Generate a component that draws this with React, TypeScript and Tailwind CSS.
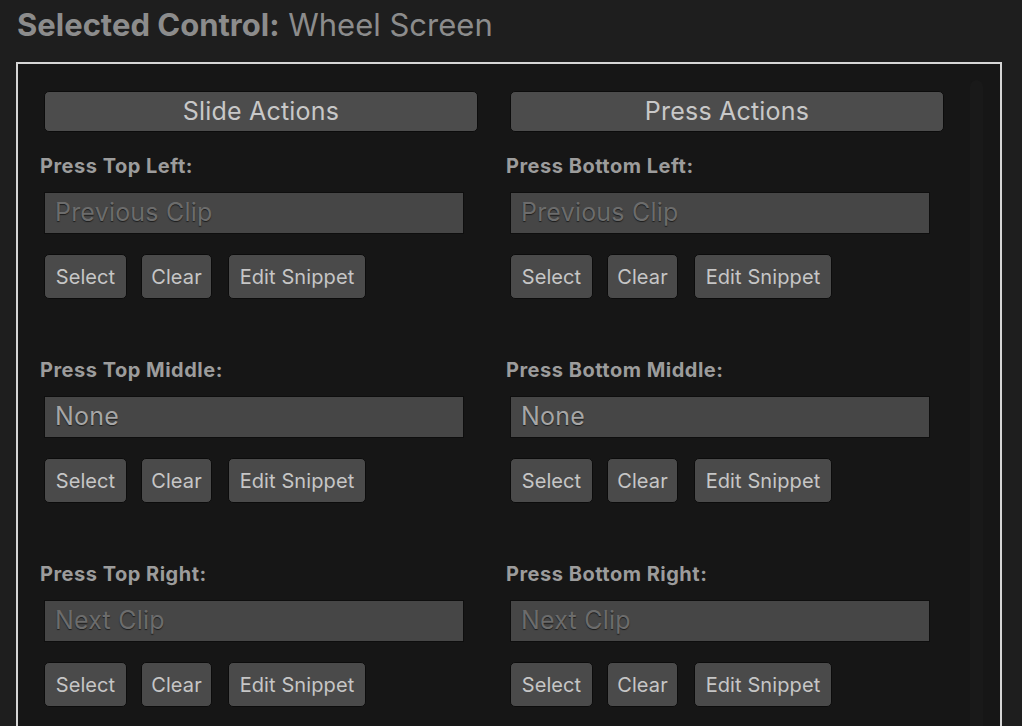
import React from "react";

const font = { fontFamily: "Inter, 'Noto Sans', sans-serif" };

interface Slot {
  label: string;
  value: string;
  placeholder?: boolean;
}

const leftSlots: Slot[] = [
  { label: "Press Top Left:", value: "Previous Clip", placeholder: true },
  { label: "Press Top Middle:", value: "None" },
  { label: "Press Top Right:", value: "Next Clip", placeholder: true },
];

const rightSlots: Slot[] = [
  { label: "Press Bottom Left:", value: "Previous Clip", placeholder: true },
  { label: "Press Bottom Middle:", value: "None" },
  { label: "Press Bottom Right:", value: "Next Clip", placeholder: true },
];

function SmallButton({ children, width }: { children: React.ReactNode; width: string }) {
  return (
    <button
      className={`h-[45px] ${width} rounded-[5px] border border-[#0c0c0c] bg-[#4a4a4a] text-[20px] tracking-[0.1px] text-[#c6c6c6] flex items-center justify-center`}
    >
      {children}
    </button>
  );
}

function SlotBlock({ slot }: { slot: Slot }) {
  return (
    <div className="flex flex-col h-[204px]">
      {/* Label */}
      <div className="h-[24px] leading-[24px] text-[20px] tracking-[0.5px] font-bold text-[#9c9c9c] -ml-1">
        {slot.label}
      </div>
      {/* Value field */}
      <div className="mt-[14px] h-[42px] w-[420px] border border-[#0e0e0e] bg-[#464646] flex items-center px-[10px]">
        <span
          className={`text-[25px] tracking-[0.2px] ${slot.placeholder ? "text-[#6c6c6c]" : "text-[#a6a6a6]"}`}
          style={{ textShadow: "0 1px 1px rgba(0,0,0,0.6)" }}
        >
          {slot.value}
        </span>
      </div>
      {/* Actions */}
      <div className="mt-[20px] flex">
        <SmallButton width="w-[83px]">Select</SmallButton>
        <div className="ml-[14px]">
          <SmallButton width="w-[71px]">Clear</SmallButton>
        </div>
        <div className="ml-[16px]">
          <SmallButton width="w-[138px]">Edit Snippet</SmallButton>
        </div>
      </div>
    </div>
  );
}

function Column({ title, slots }: { title: string; slots: Slot[] }) {
  return (
    <div className="flex flex-col w-[466px]">
      <button className="h-[41px] w-[434px] rounded-[5px] border border-[#0c0c0c] bg-[#4c4c4c] text-[25px] tracking-[0.2px] text-[#c8c8c8] flex items-center justify-center">
        {title}
      </button>
      <div className="mt-[22px] flex flex-col">
        {slots.map((s) => (
          <SlotBlock key={s.label} slot={s} />
        ))}
      </div>
    </div>
  );
}

export default function App() {
  return (
    <div className="h-[726px] w-[1022px] overflow-hidden bg-[#1e1e1e] pl-[16px]" style={font}>
      {/* Header */}
      <div className="h-[62px] pt-[5px] pl-[1px] text-[31px] leading-[40px] text-[#8c8c8c]">
        <span className="font-bold">Selected Control:</span> Wheel Screen
      </div>

      {/* Panel */}
      <div className="relative w-[986px] h-[700px] border-2 border-[#d6d6d6] bg-[#161616] pt-[27px] pl-[26px]">
        <div className="flex">
          <Column title="Slide Actions" slots={leftSlots} />
          <Column title="Press Actions" slots={rightSlots} />
        </div>
        {/* Scroll track */}
        <div className="absolute left-[952px] top-[16px] w-[13px] h-[680px] rounded-full bg-[#191919]" />
      </div>
    </div>
  );
}
